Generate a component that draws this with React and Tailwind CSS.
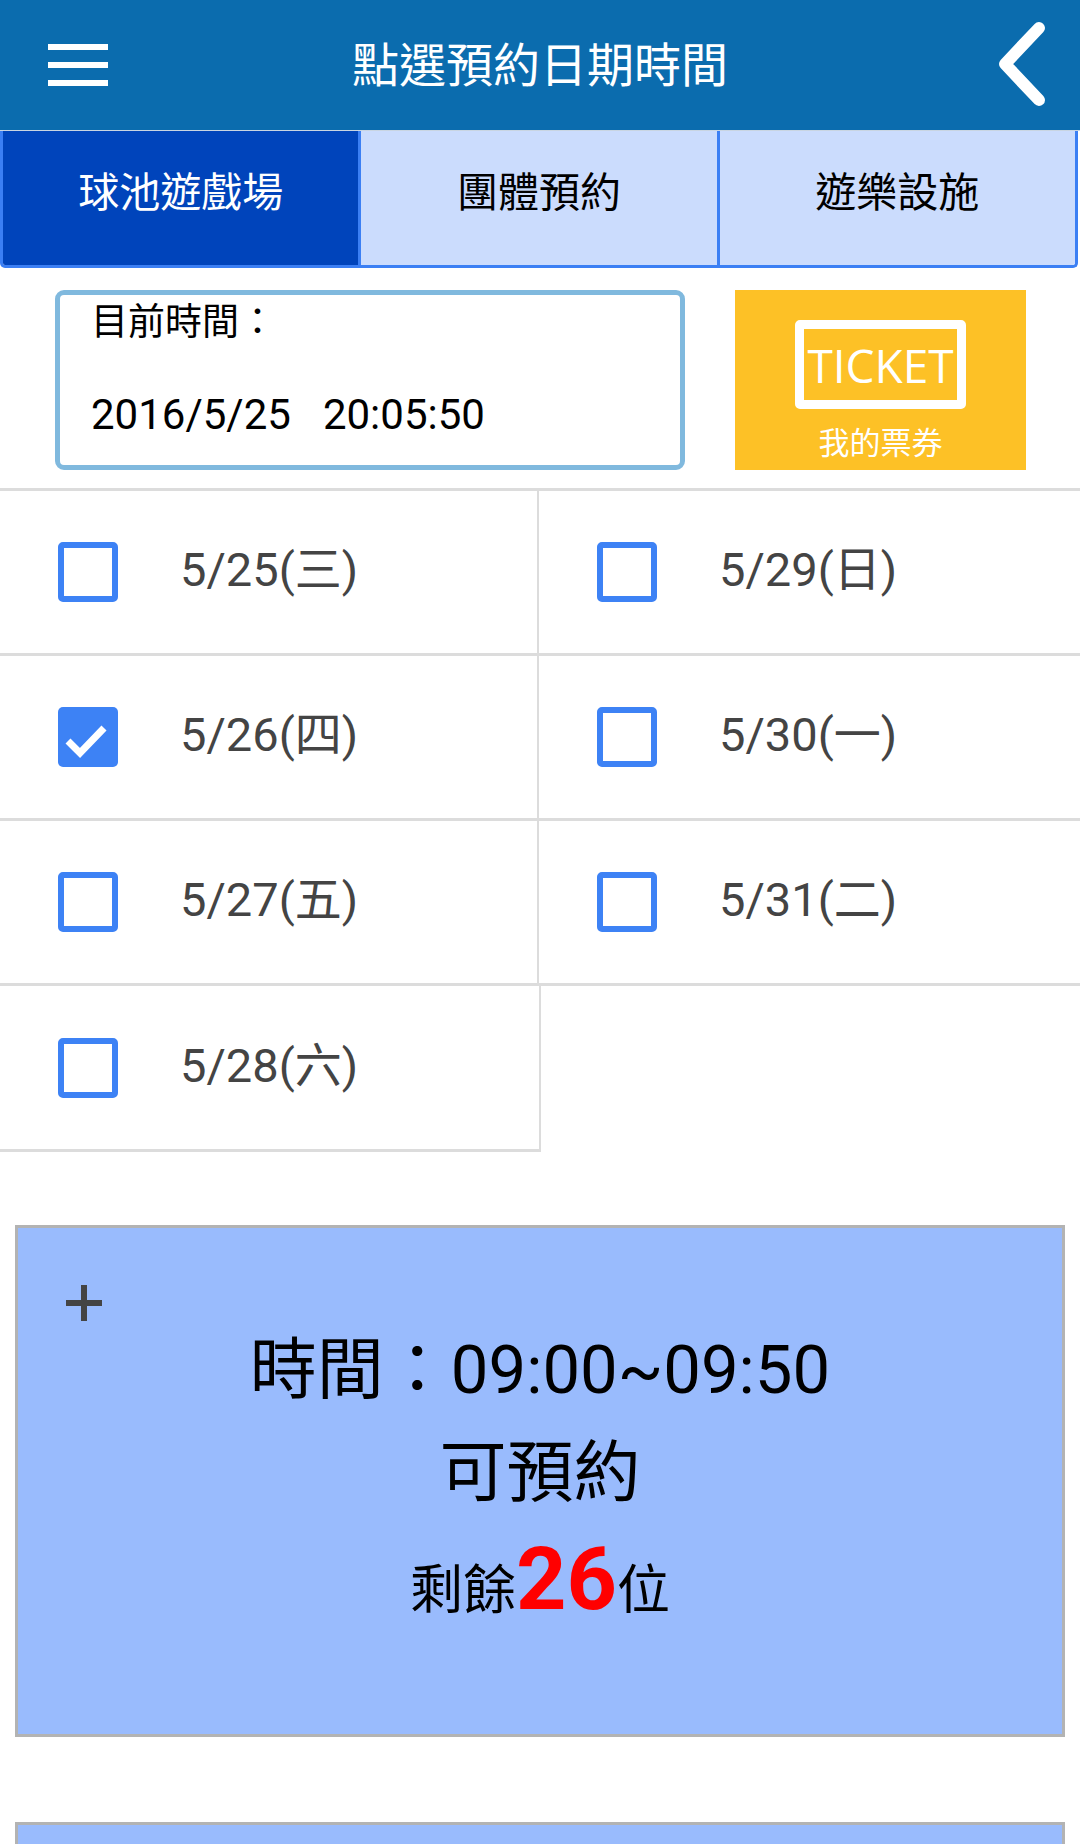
import React from "react";

const FONT = "font-['Roboto','Noto_Sans_CJK_TC',sans-serif]";

function Checkbox({ checked }) {
  if (checked) {
    return (
      <div className="w-[60px] h-[60px] rounded-[5px] bg-[#3d82f5] shrink-0 relative">
        <svg width="60" height="60" viewBox="0 0 60 60" className="absolute inset-0">
          <polyline points="10,34 22,46 46,21" fill="none" stroke="#ffffff" strokeWidth="7" strokeLinecap="butt" strokeLinejoin="miter" />
        </svg>
      </div>
    );
  }
  return <div className="w-[60px] h-[60px] rounded-[5px] border-[6px] border-[#3d82f5] bg-white shrink-0" />;
}

function DateCell({ label, checked, left }) {
  return (
    <div className={`h-[165px] border-b-[3px] border-[#dcdcdc] flex items-center pl-[58px] ${left ? "border-r-[2px]" : ""}`}>
      <Checkbox checked={checked} />
      <span className="ml-[62px] mb-[5px] text-[47px] leading-none text-[#444444]">{label}</span>
    </div>
  );
}

function Slot({ time, count }) {
  return (
    <div className="mx-[15px] h-[512px] border-[3px] border-[#b3b3b3] bg-[#99bbfd] shrink-0">
      <div className="pt-[57px] pl-[48px]">
        <div className="relative w-[36px] h-[36px]">
          <div className="absolute left-[15px] top-0 w-[6px] h-[36px] bg-[#444444]" />
          <div className="absolute left-0 top-[15px] w-[36px] h-[6px] bg-[#444444]" />
        </div>
      </div>
      <div className="mt-[16px] text-center text-[67px] leading-none text-black">{time}</div>
      <div className="mt-[36px] text-center text-[67px] leading-none text-black">可預約</div>
      <div className="mt-[28px] text-center text-[53px] leading-none text-black">
        剩餘<span className="text-[88px] font-bold text-[#ff0000]">{count}</span>位
      </div>
    </div>
  );
}

export default function App() {
  return (
    <div className={`${FONT} w-[1080px] h-[1844px] overflow-hidden bg-white flex flex-col`}>
      {/* Header */}
      <div className="h-[130px] bg-[#0b6cae] grid grid-cols-[1fr_auto_1fr] items-center shrink-0">
        <div className="pl-[48px] flex flex-col gap-[12px]">
          <div className="w-[60px] h-[6px] bg-white" />
          <div className="w-[60px] h-[6px] bg-white" />
          <div className="w-[60px] h-[6px] bg-white" />
        </div>
        <div className="text-white text-[47px] leading-none">點選預約日期時間</div>
        <div className="flex justify-end pr-[30px]">
          <svg width="56" height="90" viewBox="0 0 56 90">
            <polyline points="45,8 11,44 45,80" fill="none" stroke="#ffffff" strokeWidth="12" strokeLinecap="round" strokeLinejoin="round" />
          </svg>
        </div>
      </div>

      {/* Tabs */}
      <div className="border-t border-[#c9d5e2] shrink-0">
        <div className="w-[1078px] h-[137px] flex border-l-[3px] border-r-[3px] border-b-[3px] border-[#3b7ff4] rounded-b-[5px] overflow-hidden">
          <div className="flex-1 bg-[#0044bb] text-white text-[41px] leading-none flex items-center justify-center pb-[10px]">球池遊戲場</div>
          <div className="w-[3px] bg-[#3b7ff4]" />
          <div className="flex-1 bg-[#cbdcfd] text-black text-[41px] leading-none flex items-center justify-center pb-[10px]">團體預約</div>
          <div className="w-[3px] bg-[#3b7ff4]" />
          <div className="flex-1 bg-[#cbdcfd] text-black text-[41px] leading-none flex items-center justify-center pb-[10px]">遊樂設施</div>
        </div>
      </div>

      {/* Current time + ticket */}
      <div className="flex pt-[22px] pb-[18px] pl-[55px] gap-[50px] shrink-0">
        <div className="w-[630px] h-[180px] border-[5px] border-[#80b9de] rounded-[9px] pl-[31px] pt-[9px]">
          <div className="text-[37px] leading-none text-black">目前時間：</div>
          <div className="mt-[53px] text-[42px] leading-none text-black">
            2016/5/25<span className="ml-[32px]">20:05:50</span>
          </div>
        </div>
        <div className="w-[291px] h-[180px] bg-[#fdc126] flex flex-col items-center pt-[30px]">
          <div className="w-[171px] h-[89px] border-[9px] border-white rounded-[5px] flex items-center justify-center">
            <span className="font-['Open_Sans',sans-serif] text-[46px] leading-none text-white">TICKET</span>
          </div>
          <div className="mt-[19px] text-[31px] leading-none text-white">我的票券</div>
        </div>
      </div>

      {/* Dates grid */}
      <div className="grid grid-cols-[539px_1fr] border-t-[3px] border-[#dcdcdc] shrink-0">
        <DateCell left label="5/25(三)" />
        <DateCell label="5/29(日)" />
        <DateCell left checked label="5/26(四)" />
        <DateCell label="5/30(一)" />
        <DateCell left label="5/27(五)" />
        <DateCell label="5/31(二)" />
        <div className="h-[166px] w-[541px] border-b-[3px] border-r-[2px] border-[#dcdcdc] flex items-center pl-[58px]">
          <Checkbox />
          <span className="ml-[62px] mb-[5px] text-[47px] leading-none text-[#444444]">5/28(六)</span>
        </div>
        <div />
      </div>

      {/* Slots */}
      <div className="mt-[73px] flex flex-col gap-[85px]">
        <Slot time="時間：09:00~09:50" count="26" />
        <div className="mx-[15px] h-[512px] border-[3px] border-[#b3b3b3] bg-[#99bbfd] shrink-0" />
      </div>
    </div>
  );
}
